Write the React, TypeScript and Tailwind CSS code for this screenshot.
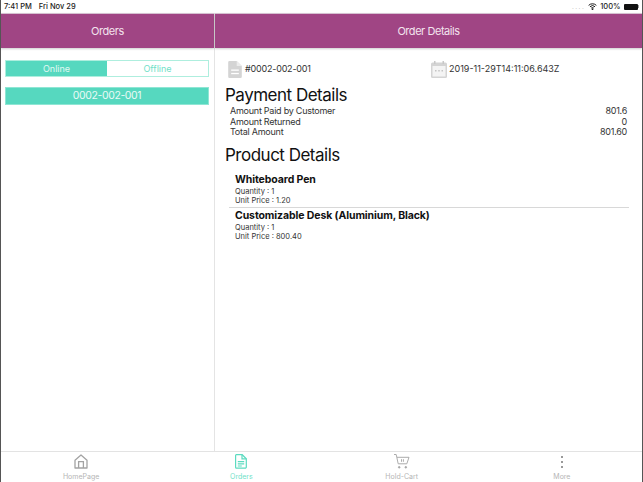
function FileIcon({ className }: { className: string }) {
  return (
    <svg viewBox="0 0 16 20" className={className}>
      <path d="M1.5 0H10l6 6v12.5a1.5 1.5 0 0 1-1.5 1.5h-13A1.5 1.5 0 0 1 0 18.5v-17A1.5 1.5 0 0 1 1.5 0z" fill="#d4d4d4" />
      <path d="M10 0l6 6h-6z" fill="#ececec" />
      <rect x="3.5" y="10" width="9" height="1.5" fill="#fff" />
      <rect x="3.5" y="14" width="9" height="1.5" fill="#fff" />
    </svg>
  )
}

function CalendarIcon() {
  return (
    <svg viewBox="0 0 16 17" className="w-[16px] h-[17px]">
      <rect x="0" y="1.5" width="16" height="15.5" rx="1.5" fill="#d4d4d4" />
      <rect x="3" y="0" width="1.5" height="3" fill="#c8c8c8" />
      <rect x="11.5" y="0" width="1.5" height="3" fill="#c8c8c8" />
      <rect x="1.5" y="5" width="13" height="10.5" fill="#f4f4f4" />
      <rect x="4" y="9" width="1.5" height="1.5" fill="#c4c4c4" />
      <rect x="7.25" y="9" width="1.5" height="1.5" fill="#c4c4c4" />
      <rect x="10.5" y="9" width="1.5" height="1.5" fill="#c4c4c4" />
    </svg>
  )
}

function HomeIcon() {
  return (
    <svg viewBox="0 0 14 15" fill="none" stroke="#a3a3a3" strokeWidth="1.3" className="w-[14px] h-[15px]">
      <path d="M1 6.2L7 1l6 5.2V14H1z" strokeLinejoin="round" />
      <path d="M4.6 14V7.6h4.8V14" />
    </svg>
  )
}

function OrdersIcon() {
  return (
    <svg viewBox="0 0 12 15" fill="none" stroke="#5cdbc0" strokeWidth="1.2" className="w-[12px] h-[15px]">
      <path d="M1.4.7h5.8l4.1 4v8.2a1.2 1.2 0 0 1-1.2 1.2H1.4a.9.9 0 0 1-.8-1V1.6a.9.9 0 0 1 .8-.9z" />
      <path d="M7 .7v4.2h4.3M2.8 7.6h6.4M2.8 9.8h6.4M2.8 12h4" />
    </svg>
  )
}

function CartIcon() {
  return (
    <svg viewBox="0 0 16 15" fill="none" stroke="#a3a3a3" strokeWidth="0.9" className="w-[16px] h-[15px]">
      <path d="M0 .5h2.2l2 9.3h8.6L15 3.3H3" />
      <path d="M7.5 5.2v2.6M9.4 5.2v2.6" />
      <circle cx="5.2" cy="13.3" r="0.8" fill="#a3a3a3" />
      <circle cx="11.8" cy="13.3" r="0.8" fill="#a3a3a3" />
    </svg>
  )
}

function TabItem({ label, active, children }: { label: string; active?: boolean; children: React.ReactNode }) {
  return (
    <div className="flex-1 flex flex-col items-center">
      <div className="h-[17px] mt-[1px] flex items-center justify-center">{children}</div>
      <span className={`text-[7px] leading-[9px] mt-[2px] ${active ? "text-[#6fdfc8]" : "text-[#b5b5b5]"}`}>{label}</span>
    </div>
  )
}

function PaymentRow({ label, value }: { label: string; value: string }) {
  return (
    <div className="flex justify-between h-[10.5px] items-center text-[9px] tracking-[-0.25px] text-[#333] pl-[5px] pr-[2px]">
      <span>{label}</span>
      <span>{value}</span>
    </div>
  )
}

function Product({ name, price }: { name: string; price: string }) {
  return (
    <div className="pl-[6px] h-[35px] pt-[1px]">
      <div className="text-[10.5px] leading-[13px] tracking-[-0.1px] font-bold text-[#111]">{name}</div>
      <div className="text-[7.5px] leading-[9px] mt-[0.5px] text-[#333]">Quantity : 1</div>
      <div className="text-[7.5px] leading-[9px] text-[#333]">Unit Price : {price}</div>
    </div>
  )
}

export default function App() {
  return (
    <div className="w-[643px] h-[482px] flex flex-col bg-white overflow-hidden border-x border-[#555] font-['Inter',sans-serif]">
      <div className="h-[13px] shrink-0 flex items-center justify-between text-[7.5px] text-[#222] pl-[3px] pr-[3px] font-medium">
        <div className="flex gap-[7px]">
          <span>7:41 PM</span>
          <span>Fri Nov 29</span>
        </div>
        <div className="flex items-center gap-[3px]">
          <span className="text-[#aaa] tracking-[1.5px] text-[6px]">....</span>
          <svg viewBox="0 0 10 8" className="w-[9px] h-[7px]" fill="none" stroke="#111" strokeWidth="1.1">
            <path d="M.6 2.7a6.3 6.3 0 0 1 8.8 0M2.1 4.3a4.1 4.1 0 0 1 5.8 0M3.6 5.8a2 2 0 0 1 2.8 0" />
            <circle cx="5" cy="7.1" r="0.6" fill="#111" />
          </svg>
          <span>100%</span>
          <div className="flex items-center gap-[0.5px]">
            <div className="w-[14px] h-[6px] bg-[#111] rounded-[1px]"></div>
            <div className="w-[1px] h-[3px] bg-[#999]"></div>
          </div>
        </div>
      </div>

      <div className="flex-1 flex min-h-0">
        <div className="w-[214px] shrink-0 border-r border-[#e4e4e4] flex flex-col">
          <div className="h-[35px] shrink-0 bg-[#a04584] border-t border-[#d5c0d0] flex items-center justify-center text-[11px] tracking-[-0.45px] text-[#f3e3ee] shadow-[0_1px_2px_rgba(0,0,0,0.2)]">
            Orders
          </div>
          <div className="pl-[4px] pr-[5px] pt-[12px] flex flex-col gap-[10px]">
            <div className="flex h-[17px] border border-[#aeeede] text-[9px]">
              <div className="flex-1 bg-[#56d8bf] text-[#e3f8f3] flex items-center justify-center">Online</div>
              <div className="flex-1 bg-white text-[#72dfc8] flex items-center justify-center">Offline</div>
            </div>
            <div className="h-[18px] bg-[#56d8bf] border border-[#8fe6d4] text-[#e8faf6] text-[10.5px] tracking-[-0.4px] flex items-center justify-center">
              0002-002-001
            </div>
          </div>
        </div>

        <div className="flex-1 flex flex-col min-w-0">
          <div className="h-[35px] shrink-0 bg-[#a04584] border-t border-[#d5c0d0] flex items-center justify-center text-[11px] tracking-[-0.45px] text-[#f3e3ee] shadow-[0_1px_2px_rgba(0,0,0,0.2)]">
            Order Details
          </div>
          <div className="pl-[10px] pr-[13px] flex flex-col">
            <div className="flex items-center h-[18px] mt-[12px] text-[9px] text-[#333]">
              <div className="w-[206px] flex items-center gap-[3px] pl-[3px]">
                <FileIcon className="w-[14px] h-[17px]" />
                <span className="tracking-[-0.2px]">#0002-002-001</span>
              </div>
              <div className="flex items-center gap-[2px]">
                <CalendarIcon />
                <span>2019-11-29T14:11:06.643Z</span>
              </div>
            </div>
            <h2 className="text-[17px] leading-[20.8px] tracking-[-0.5px] mt-[7px] text-[#111]">Payment Details</h2>
            <PaymentRow label="Amount Paid by Customer" value="801.6" />
            <PaymentRow label="Amount Returned" value="0" />
            <PaymentRow label="Total Amount" value="801.60" />
            <h2 className="text-[17px] leading-[22px] tracking-[-0.5px] mt-[7px] text-[#111]">Product Details</h2>
            <div className="mt-[6px] ml-[4px] flex flex-col">
              <div className="border-b border-[#d8d8d8]">
                <Product name="Whiteboard Pen" price="1.20" />
              </div>
              <Product name="Customizable Desk (Aluminium, Black)" price="800.40" />
            </div>
          </div>
        </div>
      </div>

      <div className="h-[31px] shrink-0 flex border-t border-[#e3e3e3] bg-white">
        <TabItem label="HomePage"><HomeIcon /></TabItem>
        <TabItem label="Orders" active><OrdersIcon /></TabItem>
        <TabItem label="Hold-Cart"><CartIcon /></TabItem>
        <TabItem label="More">
          <div className="flex flex-col gap-[3px]">
            <div className="w-[2px] h-[2px] rounded-full bg-[#777]"></div>
            <div className="w-[2px] h-[2px] rounded-full bg-[#777]"></div>
            <div className="w-[2px] h-[2px] rounded-full bg-[#777]"></div>
          </div>
        </TabItem>
      </div>
    </div>
  )
}
